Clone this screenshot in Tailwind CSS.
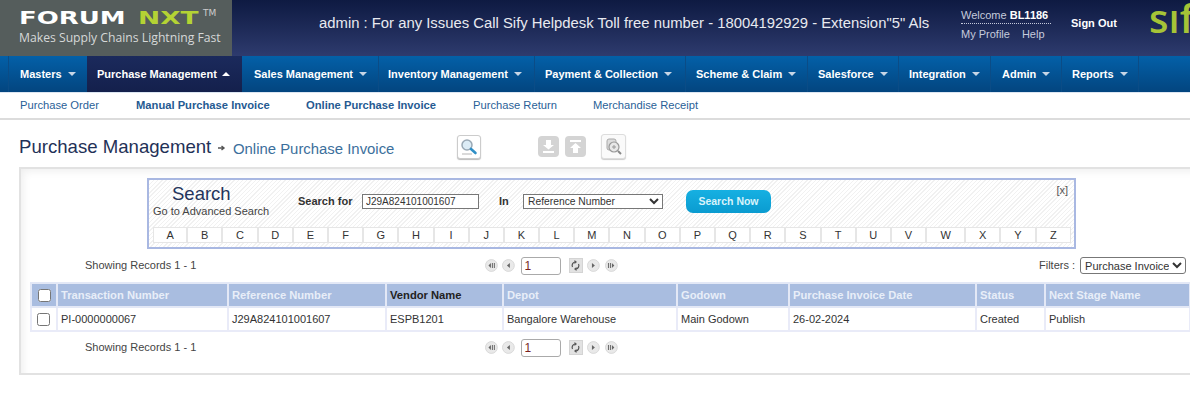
<!DOCTYPE html>
<html lang="en">
<head>
  <meta charset="UTF-8">
  <meta name="viewport" content="width=device-width, initial-scale=1.0">
  <title>Online Purchase Invoice</title>
  <script src="https://cdn.jsdelivr.net/npm/@tailwindcss/browser@4"></script>
</head>
<body class="bg-white w-[1190px] h-[416px] overflow-hidden font-['Liberation_Sans',Arial,sans-serif] text-[#333]">

  <!-- Header -->
  <header class="h-[56px] flex bg-gradient-to-b from-[#0e1a42] to-[#2e3b6e] overflow-hidden">
    <div class="w-[232px] shrink-0 bg-[#555d5c] pl-[19px] pt-[7px]">
      <div class="flex items-start h-[21px] font-['DejaVu_Sans',sans-serif] font-bold text-[18px] leading-[21px]">
        <span class="w-[119px] text-white inline-block origin-left scale-x-[1.44]">FORUM</span>
        <span class="w-[65px] text-[#b4d334] inline-block origin-left scale-x-[1.47]">NXT</span>
        <span class="text-[9px] leading-[12px] text-[#ccc] font-normal">TM</span>
      </div>
      <div class="mt-[2px] text-[12.2px] leading-[15px] text-[#d5d8d8] font-['Open_Sans',sans-serif] whitespace-nowrap">Makes Supply Chains Lightning Fast</div>
    </div>
    <div class="w-[87px] shrink-0"></div>
    <div class="w-[642px] shrink-0 pt-[15px] text-[14.85px] leading-[16px] text-[#e8eaf0] whitespace-nowrap">admin : For any Issues Call Sify Helpdesk Toll free number - 18004192929 - Extension"5" Als</div>
    <div class="w-[110px] shrink-0 pt-[8px] text-[11px] leading-[14px] text-[#c5cbdc]">
      <div class="w-[90px] pb-[1px] border-b border-dotted border-[#c5cbdc]">Welcome <b class="text-white">BL1186</b></div>
      <div class="mt-[3px] flex gap-[12px]"><span>My Profile</span><span>Help</span></div>
    </div>
    <div class="w-[78px] shrink-0 pt-[16px] text-[11px] leading-[14px] font-bold text-white">Sign Out</div>
    <div class="text-[40px] leading-[36px] font-semibold text-[#a6c437] font-['Open_Sans',sans-serif] whitespace-nowrap">sıfy</div>
  </header>

  <!-- Main menu -->
  <nav class="h-[37px] flex pl-[8px] bg-gradient-to-b from-[#0360a8] to-[#03457f] border-b border-[#dce6f2] text-[11px] font-bold text-white">
    <a class="w-[79px] pl-[11px] flex items-center border-l border-[#0b4c86]">Masters<svg class="ml-[6px]" width="8" height="4" viewBox="0 0 8 4"><path d="M0 0h8L4 4z" fill="#c8d6e6"/></svg></a>
    <a class="w-[155px] pl-[10px] flex items-center bg-gradient-to-b from-[#1b2a5c] to-[#14204c]">Purchase Management<svg class="ml-[5px]" width="8" height="4" viewBox="0 0 8 4"><path d="M0 4h8L4 0z" fill="#fff"/></svg></a>
    <a class="w-[137px] pl-[12px] flex items-center border-r border-[#0b4c86]">Sales Management<svg class="ml-[6px]" width="8" height="4" viewBox="0 0 8 4"><path d="M0 0h8L4 4z" fill="#c8d6e6"/></svg></a>
    <a class="w-[156px] pl-[9px] flex items-center border-r border-[#0b4c86]">Inventory Management<svg class="ml-[6px]" width="8" height="4" viewBox="0 0 8 4"><path d="M0 0h8L4 4z" fill="#c8d6e6"/></svg></a>
    <a class="w-[151px] pl-[10px] flex items-center border-r border-[#0b4c86]">Payment &amp; Collection<svg class="ml-[6px]" width="8" height="4" viewBox="0 0 8 4"><path d="M0 0h8L4 4z" fill="#c8d6e6"/></svg></a>
    <a class="w-[122px] pl-[10px] flex items-center border-r border-[#0b4c86]">Scheme &amp; Claim<svg class="ml-[6px]" width="8" height="4" viewBox="0 0 8 4"><path d="M0 0h8L4 4z" fill="#c8d6e6"/></svg></a>
    <a class="w-[91px] pl-[10px] flex items-center border-r border-[#0b4c86]">Salesforce<svg class="ml-[6px]" width="8" height="4" viewBox="0 0 8 4"><path d="M0 0h8L4 4z" fill="#c8d6e6"/></svg></a>
    <a class="w-[92px] pl-[10px] flex items-center border-r border-[#0b4c86]">Integration<svg class="ml-[6px]" width="8" height="4" viewBox="0 0 8 4"><path d="M0 0h8L4 4z" fill="#c8d6e6"/></svg></a>
    <a class="w-[71px] pl-[11px] flex items-center border-r border-[#0b4c86]">Admin<svg class="ml-[6px]" width="8" height="4" viewBox="0 0 8 4"><path d="M0 0h8L4 4z" fill="#c8d6e6"/></svg></a>
    <a class="w-[77px] pl-[10px] flex items-center border-r border-[#0b4c86]">Reports<svg class="ml-[6px]" width="8" height="4" viewBox="0 0 8 4"><path d="M0 0h8L4 4z" fill="#c8d6e6"/></svg></a>
  </nav>

  <!-- Sub menu -->
  <div class="h-[27px] flex items-center border-b-2 border-[#dcdcdc] pl-[20px] text-[11.2px] text-[#2a5f97]">
    <a class="w-[116px]">Purchase Order</a>
    <a class="w-[170px] font-bold text-[#255a92]">Manual Purchase Invoice</a>
    <a class="w-[167px] font-bold text-[#255a92]">Online Purchase Invoice</a>
    <a class="w-[120px]">Purchase Return</a>
    <a>Merchandise Receipt</a>
  </div>

  <!-- Page title and toolbar -->
  <div class="h-[47px] flex items-center pl-[19px] pt-[6px]">
    <h1 class="w-[192px] mt-[1px] text-[18.6px] text-[#1f3157] whitespace-nowrap">Purchase Management</h1>
    <svg class="w-[22px] mt-[3px]" width="8" height="8" viewBox="0 0 8 8"><path d="M0 4h5M3.500 2l2.500 2-2.500 2" fill="none" stroke="#555" stroke-width="1.400"/></svg>
    <span class="w-[224px] text-[14.9px] mt-[5px] text-[#3c6f9c] whitespace-nowrap">Online Purchase Invoice</span>
    <span class="w-[24px] h-[24px] flex items-center justify-center rounded-[3px] border border-[#ccc] shadow-[0_1px_1px_#bbb] bg-white">
      <svg width="18" height="18" viewBox="0 0 18 18"><circle cx="7" cy="7" r="5" fill="#dcecf6" stroke="#9aa9b5" stroke-width="1.500"/><path d="M11 11l4.500 4" stroke="#2f8fc6" stroke-width="2.600" stroke-linecap="round"/><path d="M2 16h10" stroke="#b5b5b5" stroke-width="1"/></svg>
    </span>
    <span class="w-[21px] h-[21px] ml-[57px] flex items-center justify-center rounded-[4px] bg-[#d4d4d4]">
      <svg width="15" height="15" viewBox="0 0 15 15"><path d="M5 1h5v5h3L7.500 10.500 2 6h3zM2 12h11v2H2z" fill="#fff"/></svg>
    </span>
    <span class="w-[21px] h-[21px] ml-[6px] flex items-center justify-center rounded-[4px] bg-[#d4d4d4]">
      <svg width="15" height="15" viewBox="0 0 15 15"><path d="M5 14V9H2l5.500-5L13 9h-3v5zM2 1h11v2H2z" fill="#fff"/></svg>
    </span>
    <span class="w-[25px] h-[25px] ml-[15px] flex items-center justify-center rounded-[3px] border border-[#ddd] shadow-[0_1px_1px_#ccc] bg-[#fafafa]">
      <svg width="20" height="20" viewBox="0 0 20 20"><rect x="3" y="2" width="9" height="11" rx="2" fill="#ddd" stroke="#aaa"/><circle cx="10" cy="10" r="5" fill="#e8e8e8" stroke="#999" stroke-width="1.200"/><path d="M8 10h4M10 8v4" stroke="#999"/><path d="M14 14l3 3" stroke="#888" stroke-width="2"/></svg>
    </span>
  </div>

  <!-- Panel -->
  <section class="ml-[19px] h-[208px] pt-[9px] pl-[9px] bg-white border-t-2 border-l-2 border-b-2 border-[#e2e2e2] shadow-[inset_6px_6px_8px_-4px_#eeeeee]">

    <!-- Search box -->
    <div class="relative ml-[117px] w-[929px] h-[71px] border-2 border-[#a9b8e2] bg-[repeating-linear-gradient(135deg,#f1f1f1_0,#f1f1f1_1px,#ffffff_1px,#ffffff_3px)] pl-[4px]">
      <div class="flex h-[47px]">
        <div class="w-[145px] pt-[3px]">
          <div class="pl-[19px] text-[18.5px] leading-[22px] text-[#24345c]">Search</div>
          <div class="text-[11px] leading-[13px] text-[#444]">Go to Advanced Search</div>
        </div>
        <label class="w-[64px] pt-[14px] text-[11px] leading-[14px] font-bold text-[#333] whitespace-nowrap">Search for</label>
        <input class="w-[117px] h-[15px] mt-[14px] px-[3px] border border-[#777] bg-white text-[10px] text-[#333]" value="J29A824101001607">
        <label class="w-[24px] ml-[20px] pt-[14px] text-[11px] leading-[14px] font-bold text-[#333]">In</label>
        <select class="w-[140px] h-[15px] mt-[14px] border border-[#777] bg-white text-[10.3px] text-[#333]"><option>Reference Number</option></select>
        <button class="w-[85px] h-[23px] mt-[10px] ml-[23px] rounded-[7px] bg-gradient-to-b from-[#16b0e2] to-[#0a9bd0] text-[10.5px] font-bold text-[#d8f3fb]">Search Now</button>
      </div>
      <span class="absolute top-[4px] right-[6px] text-[11px] leading-[12px] text-[#555]">[x]</span>
      <div class="flex w-[918px] h-[16px] bg-white border border-[#e6e6e6] text-[11px] text-[#333]">
        <span class="w-[34.2px] flex items-center justify-center border-r-2 border-[#e6e6e6]">A</span>
        <span class="w-[35.2px] flex items-center justify-center border-r-2 border-[#e6e6e6]">B</span>
        <span class="w-[35.2px] flex items-center justify-center border-r-2 border-[#e6e6e6]">C</span>
        <span class="w-[35.2px] flex items-center justify-center border-r-2 border-[#e6e6e6]">D</span>
        <span class="w-[35.2px] flex items-center justify-center border-r-2 border-[#e6e6e6]">E</span>
        <span class="w-[35.2px] flex items-center justify-center border-r-2 border-[#e6e6e6]">F</span>
        <span class="w-[35.2px] flex items-center justify-center border-r-2 border-[#e6e6e6]">G</span>
        <span class="w-[35.2px] flex items-center justify-center border-r-2 border-[#e6e6e6]">H</span>
        <span class="w-[35.2px] flex items-center justify-center border-r-2 border-[#e6e6e6]">I</span>
        <span class="w-[35.2px] flex items-center justify-center border-r-2 border-[#e6e6e6]">J</span>
        <span class="w-[35.2px] flex items-center justify-center border-r-2 border-[#e6e6e6]">K</span>
        <span class="w-[35.2px] flex items-center justify-center border-r-2 border-[#e6e6e6]">L</span>
        <span class="w-[35.2px] flex items-center justify-center border-r-2 border-[#e6e6e6]">M</span>
        <span class="w-[35.2px] flex items-center justify-center border-r-2 border-[#e6e6e6]">N</span>
        <span class="w-[35.2px] flex items-center justify-center border-r-2 border-[#e6e6e6]">O</span>
        <span class="w-[35.2px] flex items-center justify-center border-r-2 border-[#e6e6e6]">P</span>
        <span class="w-[35.2px] flex items-center justify-center border-r-2 border-[#e6e6e6]">Q</span>
        <span class="w-[35.2px] flex items-center justify-center border-r-2 border-[#e6e6e6]">R</span>
        <span class="w-[35.2px] flex items-center justify-center border-r-2 border-[#e6e6e6]">S</span>
        <span class="w-[35.2px] flex items-center justify-center border-r-2 border-[#e6e6e6]">T</span>
        <span class="w-[35.2px] flex items-center justify-center border-r-2 border-[#e6e6e6]">U</span>
        <span class="w-[35.2px] flex items-center justify-center border-r-2 border-[#e6e6e6]">V</span>
        <span class="w-[39px] flex items-center justify-center border-r-2 border-[#e6e6e6]">W</span>
        <span class="w-[35.2px] flex items-center justify-center border-r-2 border-[#e6e6e6]">X</span>
        <span class="w-[35.2px] flex items-center justify-center border-r-2 border-[#e6e6e6]">Y</span>
        <span class="flex-1 flex items-center justify-center">Z</span>
      </div>
    </div>

    <!-- Records bar -->
    <div class="flex items-center h-[33px] text-[11px] text-[#444]">
      <span class="w-[453px] pl-[55px]">Showing Records 1 - 1</span>
      <div class="flex items-center w-[135px]">
        <svg class="ml-[2px]" width="13" height="13" viewBox="0 0 13 13"><circle cx="6.500" cy="6.500" r="6" fill="#e9e9e9" stroke="#d8d8d8"/><path d="M6 4v5L3.500 6.500zM7 4h1v5H7zM9 4h1v5H9z" fill="#666"/></svg>
        <svg class="ml-[4px]" width="13" height="13" viewBox="0 0 13 13"><circle cx="6.500" cy="6.500" r="6" fill="#e9e9e9" stroke="#d8d8d8"/><path d="M8 4v5L5 6.500z" fill="#666"/></svg>
        <input class="w-[40px] h-[18px] ml-[6px] px-[3px] rounded-[3px] border border-[#aaa] bg-white text-[12px] text-[#7a1f1f]" value="1">
        <span class="ml-[8px] w-[15px] h-[15px] flex items-center justify-center bg-[#e2e2e2] border border-[#d4d4d4]"><svg width="11" height="11" viewBox="0 0 11 11"><path d="M2.500 7A3.500 3.500 0 0 1 5 2M8.500 4A3.500 3.500 0 0 1 6 9" fill="none" stroke="#555" stroke-width="1.200"/><path d="M4.500 0v4L7 2zM6.500 7v4L4 9z" fill="#555"/></svg></span>
        <svg class="ml-[4px]" width="13" height="13" viewBox="0 0 13 13"><circle cx="6.500" cy="6.500" r="6" fill="#e9e9e9" stroke="#d8d8d8"/><path d="M5 4v5l3-2.500z" fill="#666"/></svg>
        <svg class="ml-[5px]" width="13" height="13" viewBox="0 0 13 13"><circle cx="6.500" cy="6.500" r="6" fill="#e9e9e9" stroke="#d8d8d8"/><path d="M7 4v5l2.500-2.500zM6 4H5v5h1zM4 4H3v5h1z" fill="#666"/></svg>
      </div>
      <span class="ml-[421px] text-[#444] whitespace-nowrap">Filters :</span>
      <select class="ml-[5px] w-[106px] h-[17px] rounded-[3px] border border-[#777] bg-white text-[11px] text-[#333]"><option>Purchase Invoice</option></select>
    </div>

    <!-- Table -->
    <table class="table-fixed border-collapse w-[1159px] text-[11px] text-[#333]">
      <colgroup>
        <col class="w-[26px]"><col class="w-[171px]"><col class="w-[158px]"><col class="w-[117px]"><col class="w-[174px]"><col class="w-[112px]"><col class="w-[187px]"><col class="w-[69px]"><col class="w-[145px]">
      </colgroup>
      <thead>
        <tr class="h-[24px] bg-[#a9bde0] text-left text-[#e8eef8] font-bold text-[11.2px]">
          <th class="border-2 border-[#e3e8f6] pl-[6px]"><input type="checkbox" class="block w-[13px] h-[13px]"></th>
          <th class="border-2 border-[#e3e8f6] pl-[3px] whitespace-nowrap">Transaction Number</th>
          <th class="border-2 border-[#e3e8f6] pl-[3px] whitespace-nowrap">Reference Number</th>
          <th class="border-2 border-[#e3e8f6] pl-[3px] whitespace-nowrap text-[#222]">Vendor Name</th>
          <th class="border-2 border-[#e3e8f6] pl-[3px]">Depot</th>
          <th class="border-2 border-[#e3e8f6] pl-[3px]">Godown</th>
          <th class="border-2 border-[#e3e8f6] pl-[3px] whitespace-nowrap">Purchase Invoice Date</th>
          <th class="border-2 border-[#e3e8f6] pl-[3px]">Status</th>
          <th class="border-2 border-[#e3e8f6] pl-[3px] whitespace-nowrap">Next Stage Name</th>
        </tr>
      </thead>
      <tbody>
        <tr class="h-[24px]">
          <td class="border-2 border-[#e9ebf8] pl-[5px]"><input type="checkbox" class="block w-[13px] h-[13px]"></td>
          <td class="border-2 border-[#e9ebf8] pl-[3px]">PI-0000000067</td>
          <td class="border-2 border-[#e9ebf8] pl-[3px]">J29A824101001607</td>
          <td class="border-2 border-[#e9ebf8] pl-[3px]">ESPB1201</td>
          <td class="border-2 border-[#e9ebf8] pl-[3px]">Bangalore Warehouse</td>
          <td class="border-2 border-[#e9ebf8] pl-[3px]">Main Godown</td>
          <td class="border-2 border-[#e9ebf8] pl-[3px]">26-02-2024</td>
          <td class="border-2 border-[#e9ebf8] pl-[3px]">Created</td>
          <td class="border-2 border-[#e9ebf8] pl-[3px]">Publish</td>
        </tr>
      </tbody>
    </table>

    <!-- Records bar, bottom -->
    <div class="flex items-center h-[31px] text-[11px] text-[#444]">
      <span class="w-[453px] pl-[55px]">Showing Records 1 - 1</span>
      <div class="flex items-center w-[135px]">
        <svg class="ml-[2px]" width="13" height="13" viewBox="0 0 13 13"><circle cx="6.500" cy="6.500" r="6" fill="#e9e9e9" stroke="#d8d8d8"/><path d="M6 4v5L3.500 6.500zM7 4h1v5H7zM9 4h1v5H9z" fill="#666"/></svg>
        <svg class="ml-[4px]" width="13" height="13" viewBox="0 0 13 13"><circle cx="6.500" cy="6.500" r="6" fill="#e9e9e9" stroke="#d8d8d8"/><path d="M8 4v5L5 6.500z" fill="#666"/></svg>
        <input class="w-[40px] h-[18px] ml-[6px] px-[3px] rounded-[3px] border border-[#aaa] bg-white text-[12px] text-[#7a1f1f]" value="1">
        <span class="ml-[8px] w-[15px] h-[15px] flex items-center justify-center bg-[#e2e2e2] border border-[#d4d4d4]"><svg width="11" height="11" viewBox="0 0 11 11"><path d="M2.500 7A3.500 3.500 0 0 1 5 2M8.500 4A3.500 3.500 0 0 1 6 9" fill="none" stroke="#555" stroke-width="1.200"/><path d="M4.500 0v4L7 2zM6.500 7v4L4 9z" fill="#555"/></svg></span>
        <svg class="ml-[4px]" width="13" height="13" viewBox="0 0 13 13"><circle cx="6.500" cy="6.500" r="6" fill="#e9e9e9" stroke="#d8d8d8"/><path d="M5 4v5l3-2.500z" fill="#666"/></svg>
        <svg class="ml-[5px]" width="13" height="13" viewBox="0 0 13 13"><circle cx="6.500" cy="6.500" r="6" fill="#e9e9e9" stroke="#d8d8d8"/><path d="M7 4v5l2.500-2.500zM6 4H5v5h1zM4 4H3v5h1z" fill="#666"/></svg>
      </div>
    </div>
  </section>

</body>
</html>
